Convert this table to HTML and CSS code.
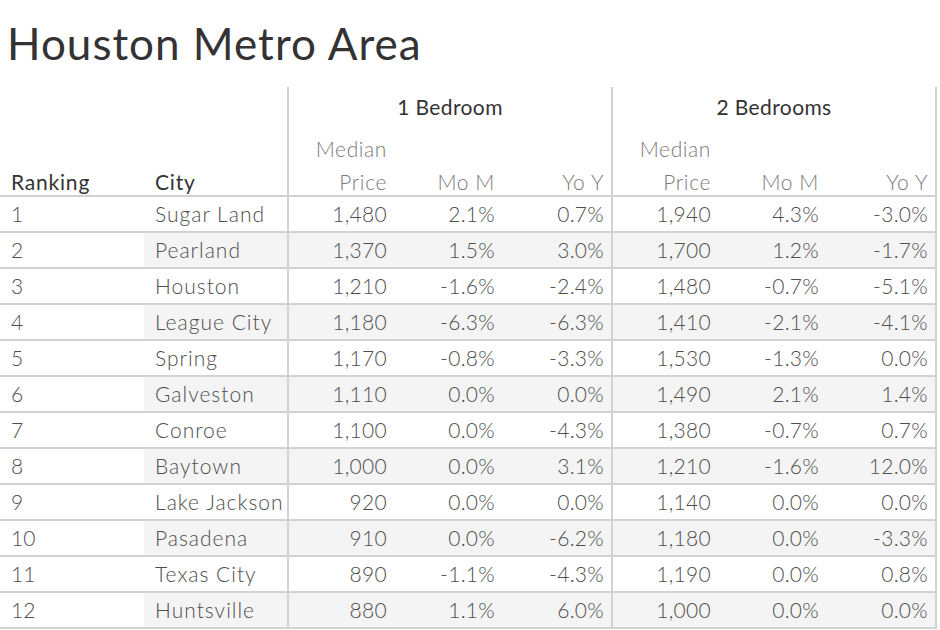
FILE: index.html
```html
<!DOCTYPE html>
<html>
<head>
<meta charset="utf-8">
<title>Houston Metro Area</title>
<link rel="stylesheet" href="styles.css">
</head>
<body>
<h1 class="title">Houston Metro Area</h1>
<div class="table">
  <div class="row groups">
    <div class="cell"></div>
    <div class="cell sep"></div>
    <div class="cell grp sep">1 Bedroom</div>
    <div class="cell grp sep">2 Bedrooms</div>
  </div>
  <div class="row heads">
    <div class="cell lbl"><span>Ranking</span></div>
    <div class="cell lbl sep"><span>City</span></div>
    <div class="cell sub"><span>Median</span><span>Price</span></div>
    <div class="cell sub"><span>Mo M</span></div>
    <div class="cell sub last sep"><span>Yo Y</span></div>
    <div class="cell sub"><span>Median</span><span>Price</span></div>
    <div class="cell sub"><span>Mo M</span></div>
    <div class="cell sub last sep"><span>Yo Y</span></div>
  </div>
  <div class="row data"><div class="cell rank">1</div><div class="cell city sep">Sugar Land</div><div class="cell num">1,480</div><div class="cell num">2.1%</div><div class="cell num last sep">0.7%</div><div class="cell num">1,940</div><div class="cell num">4.3%</div><div class="cell num last sep">-3.0%</div></div>
  <div class="row data alt"><div class="cell rank">2</div><div class="cell city sep">Pearland</div><div class="cell num">1,370</div><div class="cell num">1.5%</div><div class="cell num last sep">3.0%</div><div class="cell num">1,700</div><div class="cell num">1.2%</div><div class="cell num last sep">-1.7%</div></div>
  <div class="row data"><div class="cell rank">3</div><div class="cell city sep">Houston</div><div class="cell num">1,210</div><div class="cell num">-1.6%</div><div class="cell num last sep">-2.4%</div><div class="cell num">1,480</div><div class="cell num">-0.7%</div><div class="cell num last sep">-5.1%</div></div>
  <div class="row data alt"><div class="cell rank">4</div><div class="cell city sep">League City</div><div class="cell num">1,180</div><div class="cell num">-6.3%</div><div class="cell num last sep">-6.3%</div><div class="cell num">1,410</div><div class="cell num">-2.1%</div><div class="cell num last sep">-4.1%</div></div>
  <div class="row data"><div class="cell rank">5</div><div class="cell city sep">Spring</div><div class="cell num">1,170</div><div class="cell num">-0.8%</div><div class="cell num last sep">-3.3%</div><div class="cell num">1,530</div><div class="cell num">-1.3%</div><div class="cell num last sep">0.0%</div></div>
  <div class="row data alt"><div class="cell rank">6</div><div class="cell city sep">Galveston</div><div class="cell num">1,110</div><div class="cell num">0.0%</div><div class="cell num last sep">0.0%</div><div class="cell num">1,490</div><div class="cell num">2.1%</div><div class="cell num last sep">1.4%</div></div>
  <div class="row data"><div class="cell rank">7</div><div class="cell city sep">Conroe</div><div class="cell num">1,100</div><div class="cell num">0.0%</div><div class="cell num last sep">-4.3%</div><div class="cell num">1,380</div><div class="cell num">-0.7%</div><div class="cell num last sep">0.7%</div></div>
  <div class="row data alt"><div class="cell rank">8</div><div class="cell city sep">Baytown</div><div class="cell num">1,000</div><div class="cell num">0.0%</div><div class="cell num last sep">3.1%</div><div class="cell num">1,210</div><div class="cell num">-1.6%</div><div class="cell num last sep">12.0%</div></div>
  <div class="row data"><div class="cell rank">9</div><div class="cell city sep">Lake Jackson</div><div class="cell num">920</div><div class="cell num">0.0%</div><div class="cell num last sep">0.0%</div><div class="cell num">1,140</div><div class="cell num">0.0%</div><div class="cell num last sep">0.0%</div></div>
  <div class="row data alt"><div class="cell rank">10</div><div class="cell city sep">Pasadena</div><div class="cell num">910</div><div class="cell num">0.0%</div><div class="cell num last sep">-6.2%</div><div class="cell num">1,180</div><div class="cell num">0.0%</div><div class="cell num last sep">-3.3%</div></div>
  <div class="row data"><div class="cell rank">11</div><div class="cell city sep">Texas City</div><div class="cell num">890</div><div class="cell num">-1.1%</div><div class="cell num last sep">-4.3%</div><div class="cell num">1,190</div><div class="cell num">0.0%</div><div class="cell num last sep">0.8%</div></div>
  <div class="row data alt"><div class="cell rank">12</div><div class="cell city sep">Huntsville</div><div class="cell num">880</div><div class="cell num">1.1%</div><div class="cell num last sep">6.0%</div><div class="cell num">1,000</div><div class="cell num">0.0%</div><div class="cell num last sep">0.0%</div></div>
</div>
</body>
</html>
```
FILE: styles.css
```css
* { box-sizing: border-box; }
html, body { margin: 0; padding: 0; background: #fff; }
body {
  font-family: "Lato", "Liberation Sans", sans-serif;
  color: #555;
  width: 940px;
  height: 630px;
  overflow: hidden;
}
.title {
  margin: 0;
  padding: 21px 0 0 7px;
  height: 87px;
  font-size: 44px;
  line-height: 44px;
  font-weight: 400;
  letter-spacing: 1px;
  color: #333;
}
.table { width: 937px; }
.row {
  display: grid;
  grid-template-columns: 144px 145px 107px 108px 109px 107px 108px 109px;
}
.groups { grid-template-columns: 144px 145px 324px 324px; height: 41px; }
.cell.sep { border-right: 2px solid #d2d2d2; }
.grp {
  text-align: center;
  font-size: 21px;
  line-height: 24px;
  padding-top: 8px;
  letter-spacing: 0.4px;
  color: #333;
}
.heads {
  height: 69px;
  border-bottom: 2px solid #d2d2d2;
}
.heads .cell {
  display: flex;
  flex-direction: column;
  justify-content: flex-end;
  gap: 7px;
  font-size: 21px;
  line-height: 26px;
}
.lbl {
  align-items: flex-start;
  padding-left: 11px;
  letter-spacing: 0.8px;
  color: #333;
}
.sub {
  align-items: flex-end;
  padding-right: 9px;
  color: #7a7a7a;
  font-weight: 300;
  letter-spacing: 0.6px;
}
.sub.last { padding-right: 7px; }
.data {
  height: 36px;
  border-bottom: 2px solid #d2d2d2;
}
.data .cell {
  font-size: 21px;
  line-height: 34px;
  color: #4e4e4e;
  font-weight: 300;
  white-space: nowrap;
}
.rank { padding-left: 11px; }
.city { padding-left: 11px; letter-spacing: 1px; }
.num { text-align: right; padding-right: 9px; letter-spacing: 0.3px; }
.num.last { padding-right: 7px; }
.alt .cell:not(.rank) { background: #f4f4f4; }
```
